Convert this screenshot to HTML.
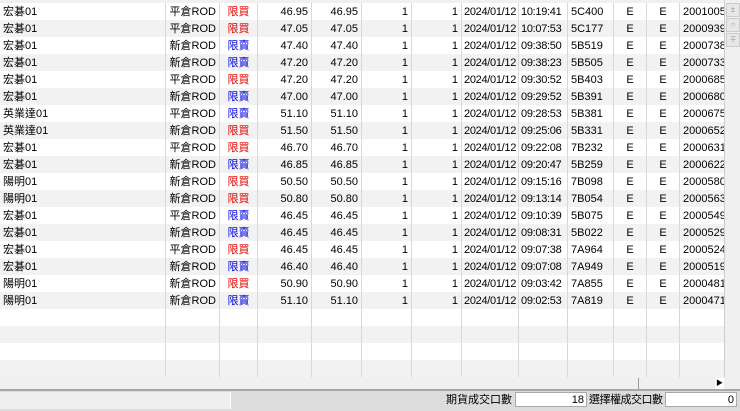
<!DOCTYPE html><html><head><meta charset="utf-8"><style>
body{margin:0;width:740px;height:411px;overflow:hidden;background:#f0f0f0;font-family:"Liberation Sans","Noto Sans CJK TC",sans-serif;font-size:11px;color:#000;position:relative}
.r{position:absolute;left:0;width:724px;height:17px}
.c{position:absolute;top:0;height:17px;line-height:18px;border-right:1px solid #d8d8d8;box-sizing:border-box;padding:0 3px;white-space:nowrap;overflow:hidden}
.rt{text-align:right}.ct{text-align:center}
.dt{padding:0 2px;letter-spacing:-0.3px}
.red{color:#e00000}.blue{color:#0000e0}
.lb{position:absolute;top:392px;height:17px;line-height:17px;white-space:nowrap;font-size:11px}
</style></head><body>
<div id="g"></div>
<div style="position:absolute;left:724px;top:0;width:16px;height:378px;background:#f0f0f0;border-left:1px solid #ccc"></div>
<div style="position:absolute;left:726px;top:3px;width:12px;height:12px;background:#e8e8e8;border:1px solid #ccc;font-size:8px;text-align:center;line-height:12px;color:#999">±</div>
<div style="position:absolute;left:726px;top:18px;width:12px;height:12px;background:#e8e8e8;border:1px solid #ccc;font-size:8px;text-align:center;line-height:12px;color:#999">○</div>
<div style="position:absolute;left:726px;top:33px;width:12px;height:12px;background:#e8e8e8;border:1px solid #ccc;font-size:8px;text-align:center;line-height:12px;color:#999">∓</div>
<div style="position:absolute;left:0;top:377px;width:740px;height:12px;background:#f0f0f0"></div>
<div style="position:absolute;left:638px;top:378px;width:86px;height:11px;border-left:1px solid #999;background:#f0f0f0"></div>
<div style="position:absolute;left:715px;top:378px;width:9px;height:11px;background:#fff;font-size:7px;line-height:11px;text-align:center">▶</div>
<div style="position:absolute;left:0;top:389px;width:740px;height:2px;background:#a8a8a8"></div>
<div style="position:absolute;left:0;top:391px;width:740px;height:20px;background:#dcdcdc"></div>
<div style="position:absolute;left:0;top:392px;width:230px;height:17px;background:#efefef;border-right:1px solid #fff"></div>
<div class="lb" style="left:440px;width:72px;text-align:right">期貨成交口數</div>
<div style="position:absolute;left:515px;top:392px;width:72px;height:15px;background:#fff;border:1px solid #aaa;line-height:15px;text-align:right;padding-right:2px;box-sizing:border-box">18</div>
<div class="lb" style="left:589px;width:74px;letter-spacing:-0.5px">選擇權成交口數</div>
<div style="position:absolute;left:665px;top:392px;width:72px;height:15px;background:#fff;border:1px solid #aaa;line-height:15px;text-align:right;padding-right:2px;box-sizing:border-box">0</div>
<script>
var d=[["宏碁01","平倉ROD",1,"46.95","10:19:41","5C400","2001005"],["宏碁01","平倉ROD",1,"47.05","10:07:53","5C177","2000939"],["宏碁01","新倉ROD",0,"47.40","09:38:50","5B519","2000738"],["宏碁01","新倉ROD",0,"47.20","09:38:23","5B505","2000733"],["宏碁01","平倉ROD",1,"47.20","09:30:52","5B403","2000685"],["宏碁01","新倉ROD",0,"47.00","09:29:52","5B391","2000680"],["英業達01","平倉ROD",0,"51.10","09:28:53","5B381","2000675"],["英業達01","新倉ROD",1,"51.50","09:25:06","5B331","2000652"],["宏碁01","平倉ROD",1,"46.70","09:22:08","7B232","2000631"],["宏碁01","新倉ROD",0,"46.85","09:20:47","5B259","2000622"],["陽明01","新倉ROD",1,"50.50","09:15:16","7B098","2000580"],["陽明01","新倉ROD",1,"50.80","09:13:14","7B054","2000563"],["宏碁01","平倉ROD",0,"46.45","09:10:39","5B075","2000549"],["宏碁01","新倉ROD",0,"46.45","09:08:31","5B022","2000529"],["宏碁01","平倉ROD",1,"46.45","09:07:38","7A964","2000524"],["宏碁01","新倉ROD",0,"46.40","09:07:08","7A949","2000519"],["陽明01","新倉ROD",1,"50.90","09:03:42","7A855","2000481"],["陽明01","新倉ROD",0,"51.10","09:02:53","7A819","2000471"]];
var cols=[[0,166],[166,220],[220,258],[258,312],[312,362],[362,412],[412,462],[462,519],[519,568],[568,614],[614,647],[647,680],[680,724]];
var h="";
for(var i=0;i<22;i++){var t=3+17*i;h+='<div class="r" style="top:'+t+'px;background:'+(i%2?'#f2f2f2':'#fff')+'">';
var r=d[i];var v=r?[r[0],r[1],r[2]?'限買':'限賣',r[3],r[3],'1','1','2024/01/12',r[4],r[5],'E','E',r[6]]:['','','','','','','','','','','','',''];
var cl=['','rt',(r?(r[2]?'ct red':'ct blue'):''),'rt','rt','rt','rt','dt','dt','','ct','ct',''];
for(var j=0;j<13;j++){h+='<div class="c '+cl[j]+'" style="left:'+cols[j][0]+'px;width:'+(cols[j][1]-cols[j][0])+'px'+(j==12?';border-right:0;padding-right:0':'')+'">'+v[j]+'</div>';}
h+='</div>';}
document.getElementById('g').innerHTML=h;
</script>
</body></html>
